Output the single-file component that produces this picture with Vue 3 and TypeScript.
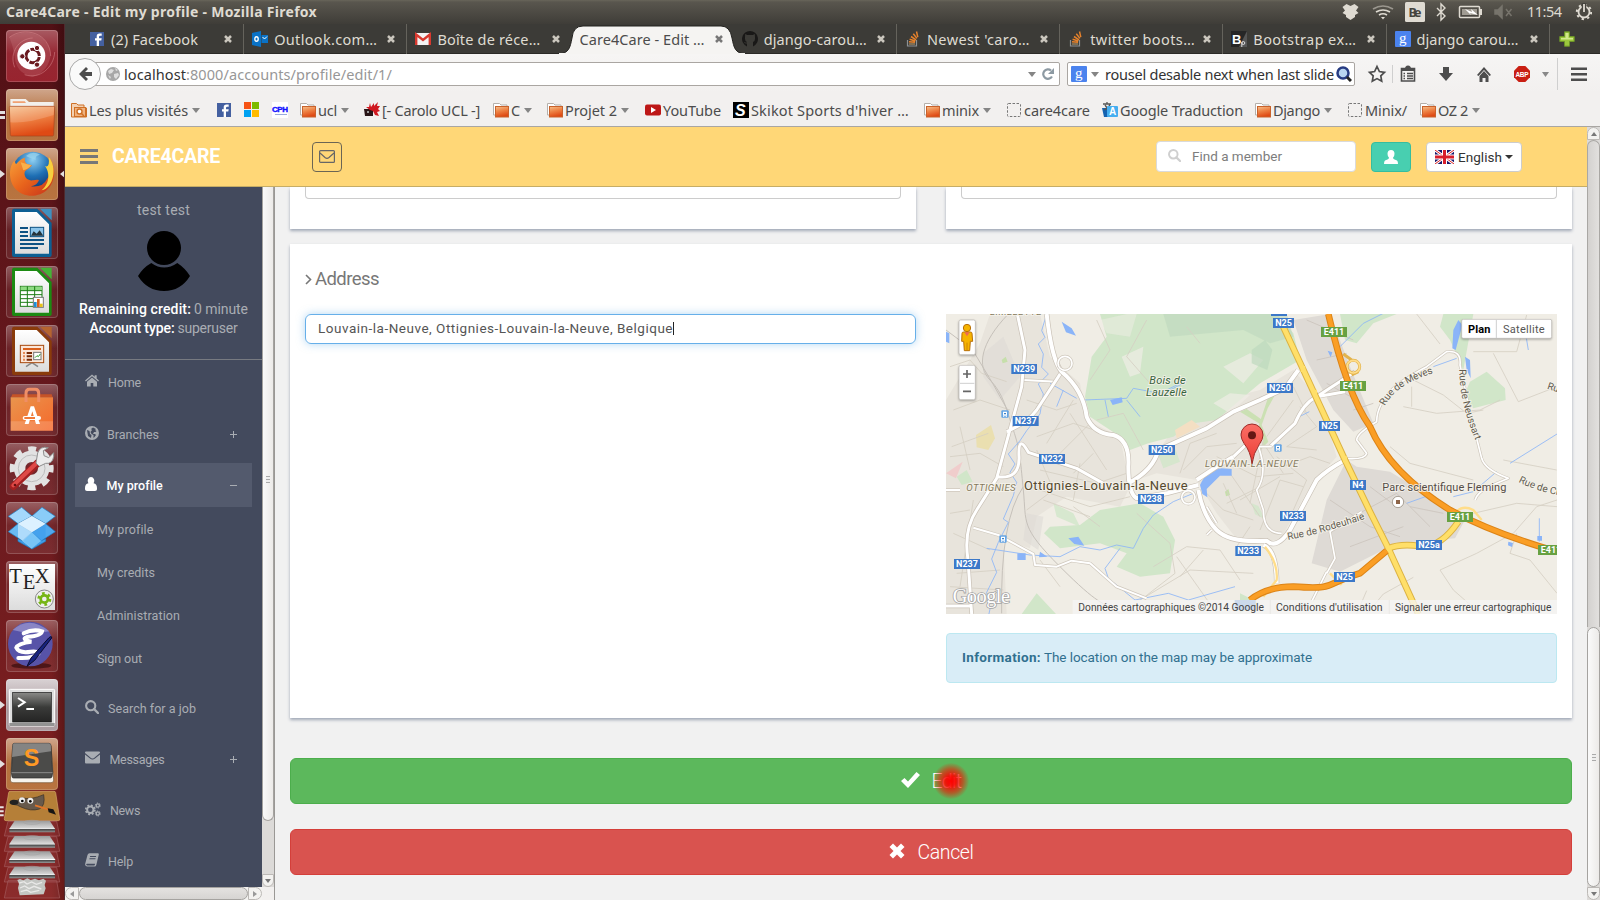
<script setup lang="ts">
import type { Directive } from 'vue'

interface Tab { title: string; width: number; icon: string; active?: boolean; sep?: boolean }
interface Bookmark { at: number; icon: string; label?: string; width?: number; menu?: boolean }
interface Shield { x: number; y: number; w: number; label: string; kind?: string }
interface Glyph { t: string; x: number; y: number; w?: number }
interface NavItem { label: string; width: number; icon?: string; iconWidth?: number; sign?: string; active?: boolean; sub?: boolean; height: number; gap?: number }

/* Tracks a piece of text so that it fills the given measure in pixels. */
const vFit: Directive<HTMLElement, number> = {
  mounted(el, binding) {
    const natural = el.getBoundingClientRect().width
    const count = (el.textContent ?? '').trim().length
    if (count) el.style.letterSpacing = `${((binding.value - natural) / count).toFixed(3)}px`
  },
}

const tabs: Tab[] = [
  { title: '(2) Facebook', width: 87, icon: 'facebook', sep: true },
  { title: 'Outlook.com…', width: 103, icon: 'outlook', sep: true },
  { title: 'Boîte de réce…', width: 103, icon: 'gmail' },
  { title: 'Care4Care - Edit …', width: 125, icon: '', active: true },
  { title: 'django-carou…', width: 103, icon: 'github', sep: true },
  { title: "Newest 'caro…", width: 103, icon: 'stack', sep: true },
  { title: 'twitter boots…', width: 105, icon: 'stack', sep: true },
  { title: 'Bootstrap ex…', width: 103, icon: 'bootply', sep: true },
  { title: 'django carou…', width: 102, icon: 'google', sep: true },
]

const bookmarks: Bookmark[] = [
  { at: 71, icon: 'smart', label: 'Les plus visités', width: 99, menu: true },
  { at: 216, icon: 'facebook' },
  { at: 243, icon: 'windows' },
  { at: 272, icon: 'cph' },
  { at: 300, icon: 'folder', label: 'ucl', width: 19, menu: true },
  { at: 364, icon: 'carolo', label: '[- Carolo UCL -]', width: 98 },
  { at: 493, icon: 'folder', label: 'C', width: 9, menu: true },
  { at: 547, icon: 'folder', label: 'Projet 2', width: 52, menu: true },
  { at: 645, icon: 'youtube', label: 'YouTube', width: 58 },
  { at: 733, icon: 'skikot', label: "Skikot Sports d'hiver …", width: 158 },
  { at: 924, icon: 'folder', label: 'minix', width: 37, menu: true },
  { at: 1006, icon: 'blank', label: 'care4care', width: 66 },
  { at: 1102, icon: 'translate', label: 'Google Traduction', width: 123 },
  { at: 1255, icon: 'folder', label: 'Django', width: 47, menu: true },
  { at: 1347, icon: 'blank', label: 'Minix/', width: 42 },
  { at: 1420, icon: 'folder', label: 'OZ 2', width: 30, menu: true },
  { at: 1500, icon: '' },
]
const slot = (i: number): number => bookmarks[i + 1].at - bookmarks[i].at

/* Letters that sit on top of some of the icons, in the icon's own units. */
const glyphs: Record<string, Glyph[]> = {
  bootply: [{ t: 'B', x: 1, y: 13 }],
  google: [{ t: 'g', x: 4, y: 12 }],
  cph: [{ t: 'CPH', x: 0, y: 10, w: 16 }],
  skikot: [{ t: 'S', x: 2, y: 14 }],
  translate: [{ t: 'A', x: 7, y: 13 }],
  tex: [{ t: 'T', x: 10, y: 67 }, { t: 'E', x: 50, y: 84 }, { t: 'X', x: 86, y: 67 }],
  sublime: [{ t: 'S', x: 53, y: 84 }],
}

const apps = ['ubuntu', 'files', 'firefox', 'writer', 'calc', 'impress', 'software', 'settings', 'dropbox', 'tex', 'emacs', 'terminal', 'sublime']
const running = ['files', 'firefox', 'terminal', 'sublime']

const nav: NavItem[] = [
  { label: 'Home', width: 33, icon: 'home', iconWidth: 23, height: 44, gap: 8 },
  { label: 'Branches', width: 52, icon: 'globe', iconWidth: 22, sign: '+', height: 44, gap: 7 },
  { label: 'My profile', width: 56, icon: 'user', iconWidth: 21.5, sign: '−', active: true, height: 44, gap: 1 },
  { label: 'My profile', width: 56, sub: true, height: 43 },
  { label: 'My credits', width: 58, sub: true, height: 43 },
  { label: 'Administration', width: 83, sub: true, height: 43 },
  { label: 'Sign out', width: 45, sub: true, height: 43, gap: 6 },
  { label: 'Search for a job', width: 88, icon: 'search', iconWidth: 23, height: 44, gap: 7 },
  { label: 'Messages', width: 55, icon: 'envelope', iconWidth: 24.5, sign: '+', height: 44, gap: 7 },
  { label: 'News', width: 30, icon: 'cogs', iconWidth: 25, height: 44, gap: 7 },
  { label: 'Help', width: 25, icon: 'book', iconWidth: 23, height: 44 },
]

const shields: Shield[] = [
  { x: 214, y: 192, w: 77, label: 'N239' }, { x: 218, y: 348, w: 78, label: 'N237' },
  { x: 297, y: 462, w: 78, label: 'N232' }, { x: 626, y: 435, w: 79, label: 'N250' },
  { x: 594, y: 582, w: 78, label: 'N238' }, { x: 42, y: 777, w: 78, label: 'N237' },
  { x: 886, y: 738, w: 77, label: 'N233' },
  { x: 999, y: 54, w: 63, label: 'N25' }, { x: 1143, y: 81, w: 78, label: 'E411', kind: 'green' },
  { x: 981, y: 249, w: 78, label: 'N250' }, { x: 1200, y: 243, w: 78, label: 'E411', kind: 'green' },
  { x: 1137, y: 363, w: 63, label: 'N25' }, { x: 1230, y: 540, w: 48, label: 'N4' },
  { x: 1020, y: 633, w: 78, label: 'N233' }, { x: 1521, y: 636, w: 78, label: 'E411', kind: 'green' },
  { x: 1428, y: 720, w: 78, label: 'N25a' }, { x: 1182, y: 816, w: 63, label: 'N25' },
  { x: 1794, y: 735, w: 78, label: 'E411', kind: 'green' },
]
</script>

<template>
  <div class="desktop">
    <svg class="defs" width="0" height="0">
      <defs>
        <linearGradient id="gFolder" x1="0" y1="0" x2="0.3" y2="1"><stop offset="0" stop-color="#f5c08c" /><stop offset=".5" stop-color="#ee8244" /><stop offset="1" stop-color="#df4a14" /></linearGradient>
        <linearGradient id="gPaper" x1="0" y1="0" x2="0" y2="1"><stop offset="0" stop-color="#fff" /><stop offset="1" stop-color="#dcdcdc" /></linearGradient>
        <linearGradient id="gBag" x1="0" y1="0" x2="1" y2="1"><stop offset="0" stop-color="#e9954d" /><stop offset="1" stop-color="#f5692c" /></linearGradient>
        <linearGradient id="gDark" x1="0" y1="0" x2="0" y2="1"><stop offset="0" stop-color="#8b8b89" /><stop offset=".5" stop-color="#3a3b39" /><stop offset="1" stop-color="#242424" /></linearGradient>
        <radialGradient id="gGlobe" cx=".5" cy=".2" r=".8"><stop offset="0" stop-color="#8fd0f2" /><stop offset=".5" stop-color="#1e6fb4" /><stop offset="1" stop-color="#0c2c66" /></radialGradient>
        <linearGradient id="gFox" x1="0" y1="0" x2="1" y2="1"><stop offset="0" stop-color="#f8a33b" /><stop offset=".5" stop-color="#e8641c" /><stop offset="1" stop-color="#c5301a" /></linearGradient>
        <linearGradient id="gDisk" x1="0" y1="0" x2="0" y2="1"><stop offset="0" stop-color="#9a9a9a" /><stop offset=".65" stop-color="#d8d8d8" /><stop offset=".7" stop-color="#fff" /><stop offset=".76" stop-color="#444" /><stop offset="1" stop-color="#999" /></linearGradient>
        <linearGradient id="gPin" x1="0" y1="0" x2="0" y2="1"><stop offset="0" stop-color="#fb6f66" /><stop offset="1" stop-color="#ea3b33" /></linearGradient>
      </defs>

      <!-- launcher -->
      <symbol id="app-ubuntu" viewBox="0 0 156 156">
        <g fill="none" stroke="#d98b90" stroke-opacity=".5" stroke-width="3"><path d="M10 22C55-12 132 8 134 78" /><path d="M26 112C8 66 40 26 80 24" /><path d="M56 134C100 150 144 112 146 66" /></g>
        <path d="M10 22C60-8 132 12 134 78q-10 50-54 62Q30 130 26 80Q20 45 10 22" fill="#d98b90" opacity=".22" />
        <circle cx="76" cy="77" r="42" fill="#fff" />
        <circle cx="80" cy="78" r="20" fill="none" stroke="#6a1a1f" stroke-width="9" stroke-dasharray="38 4" stroke-dashoffset="-3" />
        <g fill="#6a1a1f" stroke="#fff" stroke-width="3"><circle cx="49" cy="79" r="8" /><circle cx="93" cy="54" r="8" /><circle cx="93" cy="104" r="8" /></g>
      </symbol>
      <symbol id="app-files" viewBox="0 0 156 156">
        <path d="M13 30h46l10 9h74v20H13z" fill="#f3f0ec" /><path d="M20 37h36l4 5H20z" fill="#f0a172" />
        <path d="M10 54q0-2 3-2h130q3 0 3 2l-3 82q0 5-4 5H17q-4 0-4-5z" fill="url(#gFolder)" stroke="#a8441c" stroke-width="2" />
        <path d="M12 54h132l-1 24Q60 105 13 100z" fill="#fff" opacity=".17" />
      </symbol>
      <symbol id="app-firefox" viewBox="0 0 156 156">
        <circle cx="80" cy="72" r="61" fill="url(#gGlobe)" />
        <path d="M60 24q20-18 42-4q-16 3-13 16q-14-4-29-12" fill="#9bd6ee" opacity=".7" />
        <path d="M128 26C162 70 142 138 82 143C35 145 10 110 12 72c1-15 6-27 13-34l5 11c8-10 18-19 27-20c-2 8 0 15 6 19l15 4c-5 8-15 12-21 18c-6 16 8 30 24 27q12-3 18-1q-5 16-24 19q36 4 48-22C143 70 128 60 128 26" fill="url(#gFox)" />
        <path d="M128 26c27 32 15 93-21 101c28-24 22-58 10-73q15 7 11-28" fill="#f7cf3e" />
        <path d="M44 43l18 5 14 4q-9 12-24 15z" fill="#f8b04b" />
      </symbol>
      <symbol id="app-writer" viewBox="0 0 156 156">
        <path d="M24 5h70l43 43v96q0 6-6 6H24q-6 0-6-6V11q0-6 6-6" fill="#0d5f93" /><path d="M27 15h65l37 37v88H27z" fill="url(#gPaper)" /><path d="M102 5h35v35z" fill="#3f90bf" />
        <g fill="#0d5283"><path d="M42 60h24v6H42zM42 72h24v6H42zM42 84h24v6H42zM42 96h72v6H42zM42 108h72v6H42zM42 120h54v6H42z" /></g>
        <rect x="73" y="61" width="40" height="28" fill="#8cc5ea" stroke="#0d5283" stroke-width="3" /><path d="M75 86l8-13 9 7 9-10 11 16z" fill="#26343b" />
      </symbol>
      <symbol id="app-calc" viewBox="0 0 156 156">
        <path d="M24 5h70l43 43v96q0 6-6 6H24q-6 0-6-6V11q0-6 6-6" fill="#1c8a12" /><path d="M27 15h65l37 37v88H27z" fill="url(#gPaper)" /><path d="M102 5h35v35z" fill="#45b336" />
        <rect x="43" y="61" width="65" height="60" fill="#fff" stroke="#1c7c14" stroke-width="3" /><rect x="44" y="62" width="63" height="12" fill="#8edb82" /><path d="M43 74h65M43 86h65M43 98h65M43 109h65M64 61v60M86 61v60" stroke="#1c7c14" stroke-width="3" />
        <rect x="82" y="94" width="30" height="30" fill="#fff" stroke="#777" stroke-width="3" /><path d="M84 108h8v15h-8z" fill="#1e8fd6" /><path d="M93 99h8v24h-8z" fill="#d9601c" /><path d="M102 113h8v10h-8z" fill="#e6c21a" />
      </symbol>
      <symbol id="app-impress" viewBox="0 0 156 156">
        <path d="M24 5h70l43 43v96q0 6-6 6H24q-6 0-6-6V11q0-6 6-6" fill="#8a3b0b" /><path d="M27 15h65l37 37v88H27z" fill="url(#gPaper)" /><path d="M102 5h35v35z" fill="#b5642f" />
        <path d="M60 125l18-12 18 12" fill="none" stroke="#888" stroke-width="5" /><rect x="43" y="61" width="70" height="52" fill="#fbe6d8" stroke="#a8480c" stroke-width="3" />
        <path d="M51 69h54v6H51z" fill="#d9601c" /><path d="M51 81h6v6h-6zM51 91h6v6h-6zM51 101h6v6h-6z" fill="#e58a55" /><path d="M62 81h16v6H62zM62 91h16v6H62zM62 101h16v6H62z" fill="#7a2b05" /><rect x="83" y="82" width="22" height="22" fill="#fff" stroke="#777" stroke-width="3" /><path d="M87 98l6-6 4 3 6-8" fill="none" stroke="#2a9b22" stroke-width="3" />
      </symbol>
      <symbol id="app-software" viewBox="0 0 156 156">
        <path d="M19 31h118l3 9H15z" fill="#c65327" /><path d="M14 40h127v100H14z" fill="url(#gBag)" /><path d="M60 54V28q0-12 10-12h18q10 0 10 12v26" fill="none" stroke="#ef8e66" stroke-width="9" /><path d="M14 112h127v28H14z" fill="#fff" opacity=".17" />
        <path d="M56 120l18-53h10l18 53H90L79 82l-11 38z" fill="#fff" /><rect x="50" y="96" width="55" height="12" rx="6" fill="#fff" /><rect x="55" y="99" width="32" height="6" fill="#f07a39" />
      </symbol>
      <symbol id="app-settings" viewBox="0 0 156 156">
        <circle cx="77" cy="76" r="36" fill="none" stroke="#e2e2e2" stroke-width="34" /><circle cx="77" cy="76" r="58" fill="none" stroke="#e2e2e2" stroke-width="16" stroke-dasharray="24 21.5" stroke-dashoffset="12" /><circle cx="77" cy="76" r="40" fill="none" stroke="#bdbdbd" stroke-width="3" />
        <path d="M22 130L95 60" stroke="#a32021" stroke-width="22" stroke-linecap="round" /><path d="M22 127L92 60" stroke="#df4a47" stroke-width="12" stroke-linecap="round" />
        <path d="M90 60l10 10 19-9q20 3 24-20v-12l-15 15-14-6-2-15 15-9q-25-6-32 16z" fill="#ececec" stroke="#8e8e8e" stroke-width="3" /><circle cx="27" cy="126" r="4" fill="#611" />
      </symbol>
      <symbol id="app-dropbox" viewBox="0 0 156 156">
        <g stroke="#1c7fc4" stroke-width="2"><path d="M78 42L47 16 7 43l29 22z" fill="#a4d8fb" /><path d="M78 42l30-26 40 27-29 22z" fill="#8accf8" /><path d="M36 65L7 89l42 27 29-25z" fill="#6abaf3" /><path d="M119 65l29 24-42 27-28-25z" fill="#50a9ee" /><path d="M78 91l-29 25-13-6v8l42 23 41-23v-8l-13 6z" fill="#3f9ee9" /></g>
        <path d="M78 42L36 65v41l42 34z" fill="#bfe4fd" opacity=".8" /><path d="M78 42l41 23v41l-41 34z" fill="#3e9eec" opacity=".7" /><path d="M78 42l41 23-41 26-42-26z" fill="#dcf1ff" /><path d="M78 91l-28 26 28 22 27-22z" fill="#78c4f7" />
      </symbol>
      <symbol id="app-tex" viewBox="0 0 156 156">
        <rect x="9" y="9" width="138" height="138" fill="url(#gPaper)" />
        <circle cx="115" cy="114" r="27" fill="#eee" stroke="#888" stroke-width="3" /><circle cx="115" cy="114" r="11" fill="none" stroke="#76b515" stroke-width="8" /><circle cx="115" cy="114" r="17" fill="none" stroke="#76b515" stroke-width="8" stroke-dasharray="8 9.8" />
      </symbol>
      <symbol id="app-emacs" viewBox="0 0 156 156">
        <ellipse cx="76" cy="137" rx="60" ry="9" fill="#2c0708" opacity=".6" /><circle cx="73" cy="72" r="67" fill="#5753a8" /><path d="M20 30Q70-16 130 34Q70 45 20 30" fill="#aaa7d9" opacity=".6" />
        <path d="M53 40q29-15 55-6q-3 14-42 16q-24 7 10 15q-40 5-45 18q8 18 43 12q25-2 23 6q-14 15-60 13" fill="none" stroke="#fff" stroke-width="12" stroke-linecap="round" /><path d="M63 139l12-25 53-60q10-9 9 0l-51 67z" fill="#17237e" stroke="#090b2c" stroke-width="3" />
      </symbol>
      <symbol id="app-terminal" viewBox="0 0 156 156">
        <rect x="10" y="31" width="136" height="110" rx="3" fill="#dedede" stroke="#fff" stroke-width="3" /><rect x="10" y="132" width="136" height="9" fill="#929292" /><rect x="20" y="40" width="116" height="89" fill="url(#gDark)" stroke="#171717" stroke-width="2" /><path d="M36 57l20 13-20 13M61 90h23" fill="none" stroke="#fff" stroke-width="6" />
      </symbol>
      <symbol id="app-sublime" viewBox="0 0 156 156">
        <path d="M20 24l-7 102q0 8 8 8h114q9 0 8-8l-8-102z" fill="#f6f3ec" stroke="#765434" stroke-width="2" /><path d="M24 16h105q5 0 6 6l5 82-2 12q-1 4-6 4H23q-5 0-5-4l-2-12 4-82q0-6 4-6" fill="#4b4b49" stroke="#292929" stroke-width="2" /><path d="M24 16h105q5 0 6 7v17L18 57l2-35q0-6 4-6" fill="#aaa" opacity=".6" /><path d="M17 104h122" stroke="#aaa" stroke-width="2" />
      </symbol>

      <!-- 16px favicons -->
      <symbol id="i-facebook" viewBox="0 0 16 16"><rect x="1" y="1" width="14" height="14" fill="#4460a0" /><path d="M10 15V9.500h2.300l.4-2.300H10V5.900q0-1.100 1.200-1.100h1.500V2.600H10.500Q7.700 2.600 7.700 5.400v1.800H6v2.300h1.700V15z" fill="#fff" /></symbol>
      <symbol id="i-outlook" viewBox="0 0 16 16"><path d="M0 2l9-2v16l-9-2zM9.500 4H16v8H9.500z" fill="#0a72c6" /><ellipse cx="4.500" cy="8" rx="1.700" ry="2.300" fill="none" stroke="#fff" stroke-width="1.400" /><path d="M10.500 6l2 2L15 5.500" fill="none" stroke="#fff" /></symbol>
      <symbol id="i-gmail" viewBox="0 0 16 16"><path d="M0 2h16v12H0z" fill="#f3f3f3" /><path d="M1.200 14V3.500L8 9l6.800-5.500V14" fill="none" stroke="#d8392f" stroke-width="2.400" /></symbol>
      <symbol id="i-github" viewBox="0 0 16 16"><path d="M8 0a8 8 0 0 0-3 15.400V12.500Q2.800 13 2 11q1.500.2 2 1l1-1Q2.600 10 3 6.600L3.200 3l2 1h5.600l2-1 .2 3.600Q13.400 10 11 11v4.400A8 8 0 0 0 8 0" fill="#191817" /></symbol>
      <symbol id="i-stack" viewBox="0 0 16 16"><path d="M2.500 9v6h9V9" fill="none" stroke="#8e9295" stroke-width="1.200" /><path d="M4 13h6" stroke="#a68b62" stroke-width="1.300" /><path d="M4 10.800l6 .4M4.600 8.300l5.700 1.700M6 5.500l5 3.300M8.300 2.800l3.600 4.600M11.500.5l1.300 5.700" stroke="#e6822c" stroke-width="1.500" /></symbol>
      <symbol id="i-bootply" viewBox="0 0 16 16"><rect width="16" height="16" fill="#262626" /><path d="M16 0v16H8z" fill="#777" opacity=".6" /><circle cx="12.300" cy="12" r="1.500" fill="none" stroke="#ddd" /><path d="M10.800 11v5" stroke="#ddd" /></symbol>
      <symbol id="i-google" viewBox="0 0 16 16"><rect width="16" height="16" rx="1" fill="#4b83ee" /></symbol>
      <symbol id="i-windows" viewBox="0 0 16 16"><path d="M1 0h7v7H1z" fill="#f65314" /><path d="M9 0h7v7H9z" fill="#7cbb00" /><path d="M1 8h7v7H1z" fill="#00a1f1" /><path d="M9 8h7v7H9z" fill="#ffbb00" /></symbol>
      <symbol id="i-cph" viewBox="0 0 16 16"><rect width="16" height="16" fill="#fff" /><path d="M3 12.500h12" stroke="#9ad" /></symbol>
      <symbol id="i-folder" viewBox="0 0 16 16"><path d="M.5 13V1.500h6L8 3h6v10z" fill="#fff" stroke="#b5b0ab" /><rect x="2.500" y="4.500" width="13" height="10.500" fill="url(#gFolder)" stroke="#c9622c" /></symbol>
      <symbol id="i-smart" viewBox="0 0 16 16"><path d="M.5 15V1.500h5L7 3h6v3h2.500v9z" fill="#f3d1b3" stroke="#cf7026" /><rect x="3.500" y="5.500" width="11" height="9" fill="#f0b27f" stroke="#cf7026" /><circle cx="8.500" cy="9.500" r="2.500" fill="#fff" stroke="#cf7026" stroke-width="1.400" /><path d="M10.500 11.500l2.500 2.500" stroke="#cf7026" stroke-width="1.500" /></symbol>
      <symbol id="i-carolo" viewBox="0 0 16 16"><path d="M0 7h9v7H1z" fill="#291416" /><path d="M3 9h2v2H3z" fill="#999" /><path d="M2 5l3 0 1-4 1 4 3-4 0 3 4-4-1 4 3 0-2 3 2 2-3 1 2 4-4-1-2-4-3-1z" fill="#cf1820" /></symbol>
      <symbol id="i-youtube" viewBox="0 0 16 16"><rect y="2.500" width="16" height="11" rx="2" fill="#bd1717" /><path d="M6 5l5 3-5 3z" fill="#fff" /></symbol>
      <symbol id="i-skikot" viewBox="0 0 16 16"><rect width="16" height="16" /></symbol>
      <symbol id="i-blank" viewBox="0 0 16 16"><rect x="1.500" y="1.500" width="13" height="13" rx="1" fill="none" stroke="#777" stroke-dasharray="2.500 1.500" /></symbol>
      <symbol id="i-translate" viewBox="0 0 16 16"><path d="M0 6h8v9H2z" fill="#1462b0" /><path d="M1 2h8M5 0v2M2 8q5-2 6-6M3 3q2 4 6 5" stroke="#555" fill="none" stroke-width="1.300" /><rect x="5" y="4" width="11" height="11" rx="1" fill="#45aef0" /></symbol>

      <!-- page icons -->
      <symbol id="p-home" viewBox="0 0 14 12"><path d="M7 0l2.700 2.300V.8h2v3.100L14 6l-.9 1L7 1.800.9 7 0 6z" /><path d="M2 7.200L7 3l5 4.200V12H8.300V8.500H5.700V12H2z" /></symbol>
      <symbol id="p-globe" viewBox="0 0 14 14"><path fill-rule="evenodd" d="M7 0a7 7 0 1 0 0 14A7 7 0 0 0 7 0M8 1.500l3 1.500-1 1 1.500 1-1 1-1.500 0-1 2 2 0 1 1-1.500 2-1 1V9L6.500 8 5.500 6 7 4 6 3zM2 4l2.500 1L5 8l1.500 1L6 12 3 10z" /></symbol>
      <symbol id="p-user" viewBox="0 0 12 14"><path d="M6 0a3.400 3.800 0 0 1 2.600 6.200Q12 7 12 11v1.200Q12 14 10 14H2q-2 0-2-1.800V11Q0 7 3.400 6.200A3.400 3.800 0 0 1 6 0" /></symbol>
      <symbol id="p-search" viewBox="0 0 14 14"><circle cx="5.700" cy="5.700" r="4.600" fill="none" stroke="currentColor" stroke-width="2.100" /><path d="M9 9l4 4" stroke="currentColor" stroke-width="2.400" stroke-linecap="round" /></symbol>
      <symbol id="p-envelope" viewBox="0 0 15 12"><path d="M1 0h13q1 0 1 1v.6L9 6.500q-1.500 1-3 0L0 1.600V1q0-1 1-1M0 3l5 4q2.500 2 5 0l5-4v8q0 1-1 1H1q-1 0-1-1z" /></symbol>
      <symbol id="p-cogs" viewBox="0 0 16 14"><g fill="none" stroke="currentColor"><circle cx="5.300" cy="7.300" r="3.200" stroke-width="2" /><circle cx="5.300" cy="7.300" r="4.600" stroke-width="1.700" stroke-dasharray="1.900 1.720" /><circle cx="12.800" cy="3" r="1.600" stroke-width="1.300" /><circle cx="12.800" cy="3" r="2.500" stroke-dasharray="1.300 1.300" /><circle cx="12.800" cy="11" r="1.600" stroke-width="1.300" /><circle cx="12.800" cy="11" r="2.500" stroke-dasharray="1.300 1.300" /></g></symbol>
      <symbol id="p-book" viewBox="0 0 14 14"><path fill-rule="evenodd" d="M4.500.3H13q1 .2.800 1.300L11.300 12q-.4 1.600-1.800 1.600H2Q-.3 13.300.2 10.800L2.500 2Q3 .3 4.500.3M5.200 3l-.3 1h6l.3-1zM4.600 5.300l-.3 1h6l.3-1zM2 10.700q-.8.100-.8.900 0 .8.900.8h7q.6 0 .8-.9l.2-.8z" /></symbol>
    </svg>

    <header class="panel">
      <b v-fit="311" class="panel-title">Care4Care - Edit my profile - Mozilla Firefox</b>
      <svg class="tray" viewBox="0 0 252 24" width="252" height="24">
        <path d="M6.500 4l4 2 4-2 4 3-2.500 3.500 2.500 2.500-3.500 2v2l-4.500 3-4.500-3v-2l-3.500-2L5 10.500 2.500 7z" fill="#dfdbd2" />
        <g fill="none" stroke="#b9b5ac" stroke-width="1.700"><path d="M33 9q10-6 20 0" opacity=".7" /><path d="M36 12q7-4 14 0M39 15q4-2.500 8 0" stroke="#dfdbd2" /></g><path d="M41 17h4l-2 2.500z" fill="#dfdbd2" />
        <rect x="65" y="2" width="20" height="20" rx="1.500" fill="#dfdbd2" /><text x="68.500" y="17" textLength="13" class="kb">Be</text>
        <path d="M97 8l8 8-4 4V4l4 4-8 8" fill="none" stroke="#dfdbd2" stroke-width="1.400" />
        <rect x="119.500" y="6.500" width="20" height="11" rx="1" fill="none" stroke="#dfdbd2" stroke-width="1.500" /><path d="M140 9h2v6h-2z" fill="#dfdbd2" /><rect x="122" y="9" width="15" height="6" fill="#a09c93" /><path d="M125 9l7 3-1-3 7 6-8-2 1 2z" fill="#fff" />
        <path d="M155 10h3l4-4v12l-4-4h-3zM166 9l5.500 7M171.500 9l-5.500 7" fill="#77746c" stroke="#77746c" stroke-width="1.500" />
        <text x="187" y="17" textLength="35" class="clock">11:54</text>
        <circle cx="244" cy="12" r="5.500" fill="none" stroke="#dfdbd2" stroke-width="1.800" /><circle cx="244" cy="12" r="7.200" fill="none" stroke="#dfdbd2" stroke-width="2" stroke-dasharray="2.300 3.350" /><path d="M244 3v9" stroke="#45433d" stroke-width="4.500" /><path d="M244 4v8" stroke="#dfdbd2" stroke-width="1.800" />
      </svg>
    </header>

    <div class="workspace">
      <aside class="launcher">
        <div v-for="app in apps" :key="app" class="tile" :class="app">
          <svg viewBox="0 0 156 156" width="52" height="52"><use :href="'#app-' + app" /><text v-for="g in glyphs[app] ?? []" :key="g.t" :x="g.x" :y="g.y" :class="'gl-' + app">{{ g.t }}</text></svg>
          <i v-if="running.includes(app)" class="pip" :class="{ double: app === 'files' }" />
          <i v-if="app === 'firefox'" class="focus" />
        </div>
        <svg class="stack" viewBox="0 0 195 330" width="65" height="110">
          <path d="M30 4h132q4 0 5 4l12 78q1 6-4 6H18q-6 0-5-6L26 8q1-4 4-4" fill="#b57f38" stroke="#d5a869" stroke-width="2" />
          <path d="M38 31q16 4 25-8 30 8 68-9 6 33-13 43-25 8-55-6-10-7-25-8z" fill="#67594b" stroke="#332c25" stroke-width="2" /><circle cx="66" cy="31" r="9" fill="#eee" /><circle cx="91" cy="32" r="9" fill="#eee" /><circle cx="67" cy="33" r="4" /><circle cx="91" cy="34" r="4" /><ellipse cx="42" cy="37" rx="13" ry="8" fill="#222" /><path d="M105 46l42 13" stroke="#e1762a" stroke-width="5" /><path d="M143 55l17 3 8 16-22-7z" fill="#171513" />
          <path d="M0 52h11M0 64h11M0 76h11" stroke="#e8e4e4" stroke-width="6" />
          <g v-for="n in 4" :key="n" :transform="`translate(0 ${(n - 1) * 46})`">
            <path d="M24 94h146l9 44H13z" fill="#a34f52" fill-opacity=".25" stroke="#a45c5e" stroke-width="2" /><path d="M44 92h105l16 24v11H28v-11z" fill="url(#gDisk)" /><ellipse cx="96" cy="97" rx="25" ry="6" fill="none" stroke="#a4a4a4" stroke-width="2" />
          </g>
          <path d="M24 272h146l9 52H13z" fill="#a34f52" fill-opacity=".25" stroke="#a45c5e" stroke-width="2" /><path d="M52 270l8-3 10 4 12-6 10 5 13-4 12 5 13-5 8 6-4 13 3 10-6 18-72 3-5-22 3-12z" fill="#c4c6c3" /><path d="M58 279l14-4 9 7 14-6 14 7 17-6M60 294l14-6 13 8 15-7 22 8M62 305l18-5 12 7 26-6" stroke="#e9e9e8" fill="none" stroke-width="4" />
        </svg>
      </aside>

      <div class="browser">
        <div class="tabstrip">
          <div v-for="tab in tabs" :key="tab.title" class="tab" :class="{ active: tab.active, sep: tab.sep }">
            <svg v-if="tab.active" class="tab-shape" viewBox="0 0 186 30" width="186" height="30"><path d="M0 30C10 29 11 24 13 14Q14 2 24 2H162Q171 2 173 14C175 24 176 29 186 30z" fill="#f5f4f2" stroke="#23221f" stroke-width="1" /><path d="M0 30h186" stroke="#f5f4f2" stroke-width="2" /></svg>
            <svg v-if="tab.icon" class="fav" viewBox="0 0 16 16" width="16" height="16"><use :href="'#i-' + tab.icon" /><text v-for="g in glyphs[tab.icon] ?? []" :key="g.t" :x="g.x" :y="g.y" :class="'gl-' + tab.icon">{{ g.t }}</text></svg>
            <span class="tab-text"><span v-fit="tab.width">{{ tab.title }}</span></span>
            <svg class="close" viewBox="0 0 8 8" width="8" height="8"><path d="M1 1l6 6M7 1L1 7" stroke="currentColor" stroke-width="2.500" /></svg>
          </div>
          <svg class="plus" viewBox="0 0 16 16" width="16" height="16"><path d="M5.500.8h5v4.700h4.700v5h-4.700v4.700h-5v-4.700H.8v-5h4.700z" fill="#9cc83d" stroke="#6d9428" /><path d="M6.500 2h3v5H14v1.500H2V7h4.500z" fill="#d3ea8c" /></svg>
        </div>

        <div class="toolbar">
          <div class="back"><svg viewBox="0 0 14 16" width="14" height="16"><path d="M8 1L1 8l7 7 2-2-3-3h7V6H7l3-3z" fill="#4c4c4c" /></svg></div>
          <div class="urlbar">
            <svg viewBox="0 0 14 14" width="14" height="14"><circle cx="7" cy="7" r="7" fill="#a7a7a7" /><path d="M2 4l3-2 3 1-2 3-3 1zM8 7l4-1 1 2-3 4-2-2zM9 1l3 2-2 1zM2 8l3 2-1 2z" fill="#dedede" /></svg>
            <span v-fit="62" class="host">localhost</span><span v-fit="206" class="path">:8000/accounts/profile/edit/1/</span>
            <i class="arrow" />
            <svg class="reload" viewBox="0 0 12 12" width="12" height="12"><path d="M10 8.500A4.700 4.700 0 1 1 9 2.500" fill="none" stroke="#8d9aa3" stroke-width="2.200" /><path d="M12 0v6H6z" fill="#8d9aa3" /></svg>
          </div>
          <div class="searchbar">
            <svg viewBox="0 0 16 16" width="16" height="16"><use href="#i-google" /><text x="4" y="12" class="gl-google">g</text></svg><i class="arrow" />
            <div class="query"><span v-fit="229">rousel desable next when last slide</span></div>
            <svg viewBox="0 0 16 16" width="16" height="16"><circle cx="7" cy="7" r="5.500" fill="#b7d4f1" stroke="#263b82" stroke-width="2.500" /><path d="M11 11l4 4" stroke="#222" stroke-width="3" /></svg>
          </div>
          <svg class="actions" viewBox="0 0 238 32" width="238" height="32" fill="#4d4d4d">
            <path d="M15 8.500l2.400 5 5.100.8-3.700 3.600.9 5.300L15 20.600l-4.700 2.600.9-5.300L7.500 14.300l5.100-.8z" fill="none" stroke="#4d4d4d" stroke-width="1.700" />
            <path d="M30.500 7v18M195.500 0v32" stroke="#cfcfcf" />
            <path d="M39.500 10.500h13v12.500h-13z" fill="none" stroke="#4d4d4d" stroke-width="1.600" /><path d="M43 11q0-3.500 3-3.500t3 3.500zM39 10h14v3H39z" /><path d="M41.500 15.500h1.500M45 15.500h6M41.500 18h1.500M45 18h6M41.500 20.500h1.500M45 20.500h6" stroke="#4d4d4d" stroke-width="1.300" />
            <path d="M81 9h6v6h4l-7 8-7-8h4z" /><path d="M115 17l7-8 7 8-1.500 1L122 12l-5.500 6z" /><path d="M117.500 18l4.500-5 4.500 5v6h-3v-4h-3v4h-3z" />
            <path d="M156.700 8h6.600l4.700 4.700v6.600l-4.700 4.700h-6.600l-4.700-4.700v-6.600z" fill="#c91f13" /><text x="153.500" y="19" textLength="13" class="abp">ABP</text>
            <path d="M180 14h7l-3.500 5z" fill="#888" /><path d="M209 9.500h16v2.500h-16zM209 15h16v2.500h-16zM209 20.500h16v2.500h-16z" />
          </svg>
        </div>

        <nav class="bookmarks">
          <div v-for="(mark, i) in bookmarks.slice(0, -1)" :key="mark.at" class="mark" :style="{ width: slot(i) + 'px' }">
            <svg viewBox="0 0 16 16" width="16" height="16"><use :href="'#i-' + mark.icon" /><text v-for="g in glyphs[mark.icon] ?? []" :key="g.t" :x="g.x" :y="g.y" :textLength="g.w" :class="'gl-' + mark.icon">{{ g.t }}</text></svg>
            <span v-if="mark.label" v-fit="mark.width ?? 0">{{ mark.label }}</span>
            <i v-if="mark.menu" class="arrow" />
          </div>
        </nav>

        <div class="viewport">
          <div class="page">
            <header class="topbar">
              <svg class="burger" viewBox="0 0 18 15" width="18" height="15"><path d="M0 1.500h18M0 7.500h18M0 13.500h18" stroke="#777" stroke-width="3" /></svg>
              <b v-fit="108" class="brand">CARE4CARE</b>
              <button class="mail"><svg viewBox="0 0 16 13" width="16" height="13" fill="none" stroke="#666"><rect x=".6" y=".6" width="14.800" height="11.800" rx="1" stroke-width="1.200" /><path d="M1 3l5 4.500q2 1.600 4 0L15 3" stroke-width="1.200" /></svg></button>
              <div class="find"><svg viewBox="0 0 14 14" width="13" height="13"><use href="#p-search" /></svg><span v-fit="90">Find a member</span></div>
              <button class="me"><svg viewBox="0 0 14 14" width="14" height="14"><path d="M7 0q3.500 0 3.500 3.800 0 2.500-1.500 4 0 1 1 1.400l3 1.300q1 .6 1 3.500H0q0-2.900 1-3.500l3-1.300q1-.4 1-1.400-1.500-1.500-1.500-4Q3.500 0 7 0" fill="#fff" /></svg></button>
              <button class="lang">
                <svg viewBox="0 0 19 14" width="19" height="14"><rect width="19" height="14" fill="#16166b" /><path d="M0 0l19 14M19 0L0 14" stroke="#fff" stroke-width="3" /><path d="M0 0l19 14M19 0L0 14" stroke="#d22" stroke-width="1" /><path d="M9.500 0v14M0 7h19" stroke="#fff" stroke-width="5" /><path d="M9.500 0v14M0 7h19" stroke="#d81e2c" stroke-width="3" /></svg>
                <span v-fit="44">English</span><i />
              </button>
            </header>

            <div class="body">
              <div class="side-frame">
                <aside class="sidebar">
                  <section class="profile">
                    <p><span v-fit="53">test test</span></p>
                    <svg viewBox="0 0 156 180" width="52" height="60"><circle cx="78" cy="51" r="51" /><path d="M0 135Q15 110 40 96Q78 123 118 96Q142 112 156 135Q128 180 78 180T0 135" /></svg>
                    <p><b v-fit="112">Remaining credit:</b><span v-fit="54">0 minute</span></p>
                    <p><b v-fit="85">Account type:</b><span v-fit="60">superuser</span></p>
                  </section>
                  <ul>
                    <li v-for="(item, i) in nav" :key="i" :class="{ on: item.active, sub: item.sub }" :style="{ height: item.height + 'px', marginBottom: (item.gap ?? 0) + 'px' }">
                      <span v-if="item.icon" class="ico" :style="{ width: item.iconWidth + 'px' }"><svg :class="item.icon"><use :href="'#p-' + item.icon" /></svg></span>
                      <span v-fit="item.width">{{ item.label }}</span>
                      <svg v-if="item.sign" class="sign" viewBox="0 0 7 7" width="7" height="7"><path :d="item.sign === '+' ? 'M0 3.500h7M3.500 0v7' : 'M0 3.500h7'" stroke="currentColor" /></svg>
                    </li>
                  </ul>
                </aside>
                <div class="vbar side"><div class="thumb"><i /></div><div class="step down" /></div>
                <div class="hbar"><div class="step left" /><div class="thumb" /><div class="step right" /></div>
              </div>

              <main class="content">
                <div class="pair"><section class="card"><div class="field" /></section><section class="card"><div class="field" /></section></div>

                <section class="card address">
                  <h3><svg viewBox="0 0 7 11" width="7" height="11"><path d="M1 1l4.500 4.500L1 10" fill="none" stroke="#777" stroke-width="1.600" /></svg><span v-fit="64">Address</span></h3>
                  <div class="columns">
                    <div class="input"><span v-fit="355">Louvain-la-Neuve, Ottignies-Louvain-la-Neuve, Belgique</span><i /></div>
                    <div class="where">
                      <svg class="map" viewBox="18 42 1833 900" width="611" height="300">
                        <rect x="18" y="42" width="1833" height="900" fill="#f0ede5" />
                        <g fill="#e8e4dc">
                          <path d="M18 300L120 130 150 42H300L330 170 420 250 440 360 540 410 570 560 540 620 380 590 290 650 270 745 190 720 200 942H18z" />
                          <path d="M700 390L840 300 960 270 1060 210 1140 300 1190 470 1110 560 1020 720 900 730 830 640 770 540 650 520 590 540z" />
                        </g>
                        <g fill="#dedad5">
                          <path d="M1060 60L1170 42 1230 200 1300 370 1240 395 1180 330 1100 180z" /><path d="M1220 480L1250 500 1350 515 1450 575 1580 650 1545 715 1370 730 1200 815 1115 790 1160 600z" />
                          <path d="M130 160L190 110 240 230 180 300 130 230z" opacity=".6" /><path d="M260 640L310 650 295 750 250 720z" opacity=".6" />
                        </g>
                        <g fill="#d1e6c9">
                          <path d="M480 42H1010L1060 100 1080 180 960 250 900 300 830 360 760 370 700 410 625 430 570 450 525 400 450 350 435 290 455 170 500 110z" />
                          <path d="M330 680L420 675 480 630 600 610 670 650 705 720 690 820 600 830 530 800 560 760 480 730 360 745 312 700z" />
                          <path d="M1200 42H1370L1300 70 1250 130 1215 120zM1510 42H1600L1570 210 1530 120 1500 80z" /><path d="M1590 245L1640 215 1695 265 1697 300 1600 325 1570 290z" />
                          <path d="M245 942L290 880 348 942zM900 880L960 910 900 940zM50 530L80 510 98 545 65 555z" />
                          <path d="M340 610l60 30 20 40-70-30zM935 610l20 8 20 40-30-15zM655 465l50-20 15 40-50 20z" opacity=".8" />
                        </g>
                        <path d="M480 60L560 42H590L570 110 500 100z" fill="#f0ede5" opacity=".5" /><path d="M545 170l65-30-10 80-30 10zM850 200l80-40 40 20-60 70zM820 310l50-30 60 5-60 55z" fill="#f0ede5" opacity=".7" />
                        <path d="M670 42H1040L1060 110 990 130 910 90 690 110z" fill="#bfd8bf" opacity=".65" /><path d="M935 150l40-30 22 30-15 60-47-20z" fill="#bdd9bd" opacity=".7" />
                        <g fill="#c6dfab"><path d="M900 335l20-8 50 35-6 12zM985 290l20-5-22 40-18 50 20 50-25 25 10-30-15-40z" opacity=".85" /><path d="M185 180l12-10 6 15-15 5zM855 575l10-8 5 18-12 4z" /></g>
                        <path d="M108 405l45-30 12 40-20 35-35-8z" fill="#eadfb0" /><path d="M705 390l50-30 25 20-70 35z" fill="#f4dfc3" /><path d="M18 520l50-35-20 50z" fill="#f0cdcc" />

                        <g fill="none" stroke="#d5cfc3" stroke-width="2.500">
                          <path d="M30 200l60-20 35 40 75 25M40 330l80-30 90 30M30 470l90-10 70 40M35 440l110-40M60 380l30 130M260 300l90 30 60-20M290 410l110-40 140 45M400 300l-80 130M350 470l100-100M390 340l110 170M300 510l170 40 90-30M270 560l180 60 120-30M310 600l140 50M420 490l-20 110M460 460l-60 60M30 640l60-10M40 700l110 50M50 820l130-10M30 860l160 10M100 600l-40 260M290 450l50 120-80 60M470 60l40 90-60 90M620 60l-60 110 70 80M740 80l40 50M470 360l80-20 60 110" />
                          <path d="M590 640l100 90 15 90-90 70M640 800l100-60 100 10 60 90M710 770l120 170M600 900l150-90 190 10M790 750l-70 80M300 780l60 80M400 620l80 60M930 680l-40 60" />
                          <path d="M730 510l70-70 90-10M790 570l60 60 90 30M830 470l120 60 110-10M850 550l40 90M870 520l90 130M900 400l70 30 60 90M970 420l-40 190M900 600l120-70M960 690l60-150 70 20M860 610l100-50M1060 300l-80 110M1080 320l50 60-90 60 90 10M1010 470l90 70-40 90M1060 260l40 80M1030 500l80-30 60 20M720 520l30-90 80-30" />
                          <path d="M1100 60l140 60M1130 180l90-20M1160 250l90 50M1240 330l60-20M1170 600l120 80 90 30M1290 560l80 60M1220 660l150-80 100 100M1230 740l160-60M1410 620l100 20" stroke="#cbc4bd" />
                          <path d="M1430 42l70 90M1600 155h130l30-110M1660 160l75 145 116-45M1415 260v60M1420 240l90 45 70 55 50-10M1390 320l100 20 130-10 60-30M1690 480l160 30M1350 440l60 50 190 50M1600 640l130-30 121 10M1500 810l110-50 110-60 70-80 61-20M1500 810l40 60 80 70M1730 700l-20 60 60 20 81 100M1280 942l50-60 90-50M1250 942l30-70" />
                        </g>
                        <g fill="none" stroke="#c6c1ba" stroke-width="3"><path d="M205 42C120 130 110 200 150 240S200 330 220 390 240 470 250 570 240 680 360 800 480 900 540 942" /><path d="M18 90l80 60 60 100 50 90M250 560q-70 100-65 380" /></g>
                        <g fill="none" stroke="#8ab4f8" stroke-width="2.500">
                          <path d="M320 42l-15 50 10 20-20 20 15 30-5 40 20 20-30 30 15 30-10 60-40 50-20 30-35 40 20 30-15 25 20 30-10 40-30 70 15 10-30 60-20 50 15 40-30 60 10 50-15 70 40 50" />
                          <path d="M140 745l130 20 90 5 60-30 60 10 50-15 50 10 30-60 30-40 60-40 60-25M540 745l-45 60 10 30 80 65 100-20 60 20 140-40M430 300l130-5 20-30 80 15 60-30M495 300l10 50M560 300l40 50M330 250l80 45M350 320l20-50M680 275l60-30" />
                          <path d="M1200 140l70-70 60-30M1750 60l15 90M1480 200l70-25M1068 370l10-20 30-15M1540 590l60-15 70-60M1400 610l70-25M1710 490l141-88M1798 655v70" />
                        </g>
                        <g fill="#8ab4f8"><path d="M365 65l30 20 13 22-30-10zM385 715l30-5 18 27-30-5zM232 760h25v20h-25zM300 755l22 15-25 2zM510 300l35-8 3 15-30 8zM780 555q20-45 65-50l30 2v20l-35 0-40 40 2 25-15-10z" /><path d="M1540 90l15-30 12 15-20 75-10-5zM1575 170l15 10 2 55-12-25zM1163 152l14 5-5 15zM1792 708h14v14h-14zM1705 725l14 4-3 12-12-5zM1115 65l12-4M18 95l10 5v30l-10-5z" /></g>

                        <g fill="none" stroke="#d5cec3" stroke-linejoin="round">
                          <path v-for="w in [1, 0]" :key="w" :stroke="w ? '#cfc8bd' : '#fff'" :stroke-width="w ? 10 : 6" d="M250 240L350 245M100 683L175 705 280 762 285 795 350 800 395 782 450 790 530 860 620 895M18 570H60" />
                          <path v-for="w in [1, 0]" :key="'a' + w" :stroke="w ? '#c9c1b6' : '#fff'" :stroke-width="w ? 13 : 9" d="M232 42L255 150 245 260 170 535 110 630Q70 690 84 780L95 942M200 395Q260 370 290 330L365 215M170 530Q240 540 237 470T265 457L410 505 490 550M18 918H90M875 475L915 437M1215 275L1130 290Q1090 310 1065 370L990 440M1130 290L1245 215" />
                          <path v-for="w in [1, 0]" :key="'b' + w" :stroke="w ? '#c9c1b6' : '#fff'" :stroke-width="w ? 16 : 12" d="M320 42Q335 180 365 215Q430 270 440 350Q460 400 520 405Q570 420 565 500Q565 580 590 595L680 580 775 555M565 550Q640 510 655 450L800 385 880 335 960 300 1035 265 1075 210M770 540L830 500 880 470M775 570Q790 650 830 690Q870 730 980 722Q1010 750 1050 690L1130 540Q1160 510 1215 480M970 735Q1010 750 1010 850" />
                          <g v-for="w in [1, 0]" :key="'c' + w" :stroke="w ? '#cfc8bd' : '#fff'" :stroke-width="w ? 9 : 5"><circle cx="375" cy="190" r="21" /><circle cx="745" cy="592" r="20" /><path d="M800 620l30 50M815 690l-15 15M1215 475q60 5 65-15l-30-40q0-20 60-55 0-55 60-110 60-40 90-55l60-45q45-5 40 40l25 120 40 160q10 35 80 60l-60 25q-35 20-40 40M955 440q30 80-5 130l20 60q0 70 55 70M950 440l45 0M1265 635l-95 60 15 80-25 45M1160 815l-45 90" /></g>
                          <g stroke="#e2b34d"><circle cx="1240" cy="200" r="19" stroke-width="9" /><path d="M1210 162l25 18M1255 215l-20 10" stroke-width="9" /></g><g stroke="#ffdd8a"><circle cx="1240" cy="200" r="19" stroke-width="5" /><path d="M975 740Q1015 790 1010 840L970 890M1170 820l35 35M1540 650q20-40 60-20l25 30" stroke-width="7" /></g>
                          <path v-for="w in [1, 0]" :key="'d' + w" :stroke="w ? '#dcb343' : '#ffdf69'" :stroke-width="w ? 20 : 14" d="M1025 70L1088 205 1215 480 1290 635 1345 745 1435 942M1345 745Q1380 730 1440 738T1555 665" />
                          <path v-for="w in [1, 0]" :key="'e' + w" :stroke="w ? '#dc8417' : '#fa9e25'" :stroke-width="w ? 20 : 14" d="M1165 42Q1220 280 1290 380Q1350 520 1530 630Q1660 700 1851 755M930 900Q980 860 1060 860C1200 870 1150 850 1260 820L1340 752" />
                          <path d="M1082 207h14M1121 278h10M1209 478h12" stroke="#ffdf69" stroke-width="18" />
                        </g>

                        <g v-for="p in [[195, 342], [189, 717], [1014, 444]]" :key="p[1]" :transform="`translate(${p[0]} ${p[1]})`"><rect x="-11" y="-11" width="22" height="22" rx="3" fill="#64a4e4" /><path d="M-6-7H6V5H-6zM-6 6h4v2h-4zM2 6h4v2H2z" fill="#fff" /><path d="M-3-3h6v4h-6z" fill="#3c82cc" /></g>

                        <rect x="993" y="36" width="48" height="12" fill="#3c78c8" /><rect x="884" y="900" width="63" height="30" fill="#3c78c8" />
                        <g v-for="(s, i) in shields" :key="i"><rect :x="s.x" :y="s.y" :width="s.w" height="30" :fill="s.kind ? '#67a142' : '#3c78c8'" /><text :x="s.x + s.w / 2" :y="s.y + 25" class="shield">{{ s.label }}</text></g>

                        <g class="labels">
                          <text x="628" y="251" textLength="109" class="wood">Bois de</text><text x="618" y="287" textLength="122" class="wood">Lauzelle</text>
                          <text x="252" y="571" textLength="491" class="town">Ottignies-Louvain-la-Neuve</text>
                          <text x="79" y="574" textLength="148" class="quarter">OTTIGNIES</text><text x="795" y="502" textLength="280" class="quarter">LOUVAIN-LA-NEUVE</text>
                          <text x="150" y="46" textLength="155" class="quarter">LIMELETTE</text>
                          <text x="1327" y="572" textLength="372" class="park">Parc scientifique Fleming</text>
                          <defs><path id="wMeves" d="M1335 318Q1365 255 1480 219" /><path id="wNeus" d="M1558 208Q1558 310 1608 425" /><path id="wRod" d="M1044 720Q1150 700 1280 655" /><path id="wCr" d="M1735 546Q1790 575 1880 590" /></defs>
                          <text class="street"><textPath href="#wMeves" textLength="180">Rue de Mèves</textPath></text><text class="street"><textPath href="#wNeus" textLength="220">Rue de Neussart</textPath></text><text class="street"><textPath href="#wRod" textLength="240">Rue de Rodeuhaie</textPath></text><text class="street"><textPath href="#wCr">Rue de Croix</textPath></text><text x="1820" y="266" transform="rotate(18 1820 266)" class="street">Rue</text>
                        </g>
                        <circle cx="1374" cy="606" r="17" fill="#fff" stroke="#aaa297" stroke-width="3" /><path d="M1368 600h12v12h-12z" fill="#8d6549" />
                        <path d="M936 491Q932 455 912 430Q903 416 903 405A33 33 0 0 1 969 405Q969 418 958 433Q940 460 936 491" fill="url(#gPin)" stroke="#9e2b28" stroke-width="3" /><circle cx="936" cy="406" r="12" fill="#651714" />

                        <rect x="398" y="900" width="1453" height="42" fill="#f5f5f5" fill-opacity=".78" /><path d="M991 900v42M1348 900v42" stroke="#e6e4df" stroke-width="2" />
                        <g class="legal"><text x="415" y="933" textLength="557" lengthAdjust="spacingAndGlyphs">Données cartographiques ©2014 Google</text><text x="1008" y="933" textLength="320" lengthAdjust="spacingAndGlyphs">Conditions d'utilisation</text><text x="1365" y="933" textLength="469" lengthAdjust="spacingAndGlyphs">Signaler une erreur cartographique</text></g>
                        <text x="38" y="909" textLength="172" class="logo">Google</text>

                        <g class="ctl"><rect x="57" y="60" width="49" height="104" rx="5" /><rect x="57" y="196" width="49" height="103" rx="5" /><rect x="1565" y="58" width="270" height="57" rx="5" /></g>
                        <path d="M60 250h43M1669 59v55" stroke="#cfcfcf" stroke-width="3" /><path d="M69 222h24M81 210v24M69 274h24" stroke="#666" stroke-width="5" />
                        <g fill="#f6b400" stroke="#b8700a" stroke-width="3"><path d="M66 100q0-4 5-4h20q5 0 5 4l2 24h-7l-2 28H73l-2-28h-6z" /><circle cx="81" cy="84" r="11" /><path d="M81 128v22" stroke-width="2" /><path d="M73 97h16l-8 12z" fill="#ed6b54" stroke="none" /></g>
                        <text x="1584" y="98" textLength="67" class="plan">Plan</text><text x="1689" y="98" textLength="125" class="sat">Satellite</text>
                      </svg>
                      <div class="info"><b v-fit="79">Information:</b><span v-fit="268">The location on the map may be approximate</span></div>
                    </div>
                  </div>
                </section>

                <button class="big edit"><svg viewBox="0 0 19 16" width="19" height="16"><path d="M0 9l3.500-3L7 9.500 15.500 0 19 3 7 16z" fill="#fff" /></svg><span v-fit="30">Edit</span><i class="click" /></button>
                <button class="big cancel"><svg viewBox="0 0 16 16" width="16" height="16"><path d="M4 .5l4 4 4-4L15.500 4l-4 4 4 4L12 15.500l-4-4-4 4L.5 12l4-4-4-4z" fill="#fff" /></svg><span v-fit="56">Cancel</span></button>
              </main>
            </div>
          </div>
          <div class="vbar main"><div class="step up" /><div class="trough" /><div class="thumb"><i /></div><div class="step down" /></div>
        </div>
      </div>
    </div>
  </div>
</template>

<style>
html, body { margin: 0; overflow: hidden; }
</style>

<style scoped>
* { box-sizing: border-box; }
.desktop { width: 1600px; height: 900px; overflow: hidden; display: flex; flex-direction: column; font: 14.5px "Noto Sans", "Open Sans", sans-serif; color: #4c4c4c; }
.desktop span, .desktop b { display: inline-block; white-space: nowrap; }
.defs { position: absolute; }
button { font: inherit; padding: 0; margin: 0; }
.gl-tex { font: 62px "Liberation Serif", serif; fill: #222; }
.gl-sublime { font: bold 70px "Liberation Sans", sans-serif; fill: #ff9924; }
.gl-bootply { font: bold 13px "Liberation Sans", sans-serif; fill: #fff; }
.gl-google { font: 15px "Liberation Serif", serif; fill: #fff; }
.gl-cph { font: bold 8px "Liberation Sans", sans-serif; fill: #11f; stroke: #11f; stroke-width: .4px; }
.gl-skikot { font: italic bold 16px "Liberation Sans", sans-serif; fill: #fff; }
.gl-translate { font: bold 10px "Liberation Sans", sans-serif; fill: #fff; }

.panel { height: 24px; flex: none; display: flex; justify-content: space-between; padding: 0 8px 0 6px; align-items: center; background: linear-gradient(#68655a 0, #59564e 2px, #3f3d38 24px); color: #dfdbd2; }
.panel-title { font-size: 14px; line-height: 24px; }
.kb { font: bold 12.500px "Noto Sans", sans-serif; fill: #45433d; }
.clock { font: 14.500px "Noto Sans", sans-serif; fill: #dfdbd2; }
.workspace { flex: 1; display: flex; min-height: 0; }

.launcher { width: 65px; flex: none; padding: 6px 0 0 6px; display: flex; flex-direction: column; gap: 7px; background: linear-gradient(90deg, rgba(0,0,0,0) 80%, rgba(0,0,0,.22)), linear-gradient(#521015, #6a1a1f 50%, #83211f); border-right: 1px solid #4f2a2e; overflow: hidden; }
.tile { position: relative; width: 52px; height: 52px; flex: none; border-radius: 4px; background: linear-gradient(rgba(255,255,255,.3), rgba(255,255,255,.05) 45%, rgba(255,255,255,.08)); box-shadow: inset 0 0 0 1px rgba(255,255,255,.18); }
.tile > svg { display: block; }
.tile.ubuntu { background: linear-gradient(#a85a62, #962833 45%, #98242f); }
.tile.files, .tile.firefox, .tile.sublime { background: linear-gradient(#cfa68c, #b5703d 50%, #b87440); }
.tile.terminal { background: linear-gradient(#d9d2d4, #a8989c 60%, #ab9da1); }
.pip { position: absolute; left: -6px; top: 22px; border: solid transparent; border-width: 4px 0 4px 5px; border-left-color: #e3dfdf; }
.pip.double { border: 0; border-top: 3px solid #e3dfdf; border-bottom: 3px solid #e3dfdf; width: 5px; height: 8px; }
.focus { position: absolute; right: -7px; top: 22px; border: solid transparent; border-width: 4px 5px 4px 0; border-right-color: #e3dfdf; }
.stack { margin: -7px 0 0 -6px; flex: none; }

.browser { flex: 1; display: flex; flex-direction: column; min-width: 0; background: #f2f0ef; }
.tabstrip { height: 30px; flex: none; display: flex; align-items: center; background: #3c3b37; padding-left: 16px; color: #dfdbd2; border-bottom: 1px solid #2b2a27; }
.tab { position: relative; width: 163.200px; height: 30px; flex: none; display: flex; align-items: center; padding: 0 11px 0 8px; }
.tab.sep { border-right: 1px solid #65635c; }
.fav { flex: none; margin-right: 6px; }
.tab-text { flex: 1; overflow: hidden; line-height: 28px; }
.close { flex: none; color: #cbc7be; }
.tab.active { color: #4c4c4c; z-index: 1; padding-left: 9px; }
.tab.active > * { position: relative; }
.tab.active > .tab-shape { position: absolute; left: -12px; top: 0; }
.tab.active .close { color: #777; }
.plus { margin-left: 9px; }

.toolbar { height: 38px; flex: none; display: flex; align-items: center; padding: 2px 0 0 4px; background: linear-gradient(#f6f5f4, #f2f0ef); }
.back { z-index: 1; width: 32px; height: 32px; flex: none; border: 1px solid #a9a9a9; border-radius: 50%; background: #fafafa; display: grid; place-items: center; }
.urlbar { width: 974px; height: 24px; flex: none; margin-left: -15px; padding: 0 5px 0 19px; border: 1px solid #aaa6a2; border-radius: 2px; background: #fff; display: flex; align-items: center; line-height: 22px; }
.host { margin-left: 4px; color: #333; }
.path { color: #979797; }
.arrow { width: 0; height: 0; border: solid transparent; border-width: 5px 4px 0; border-top-color: #858585; }
.urlbar .arrow { margin-left: auto; }
.reload { margin-left: 6px; }
.searchbar { width: 288px; height: 24px; flex: none; margin-left: 7px; padding: 0 2px 0 3px; border: 1px solid #aaa6a2; border-radius: 2px; background: #fff; color: #333; display: flex; align-items: center; }
.searchbar .arrow { margin-left: 4px; }
.query { flex: 1; overflow: hidden; display: flex; justify-content: flex-end; margin: 0 2px 0 6px; line-height: 22px; }
.actions { margin-left: 7px; }
.abp { font: bold 6.500px "Liberation Sans", sans-serif; fill: #fff; }

.bookmarks { height: 35px; flex: none; display: flex; align-items: center; padding: 2px 0 0 6px; border-bottom: 1px solid #a9a6a3; }
.mark { display: flex; align-items: center; flex: none; line-height: 20px; }
.mark > svg { flex: none; margin-right: 2px; }
.mark .arrow { margin-left: 4px; }

.viewport { flex: 1; min-height: 0; display: flex; }
.page { width: 1522px; display: flex; flex-direction: column; font-family: Roboto, sans-serif; font-size: 13.500px; background: #f1f1f1; }
.topbar { height: 60px; flex: none; display: flex; align-items: center; background: #ffd777; border-bottom: 1px solid #c6ad66; padding-left: 15px; }
.brand { margin-left: 14px; color: #fff; font-size: 19.500px; }
.mail { margin-left: 92px; width: 30px; height: 30px; border: 1px solid #6b6554; border-radius: 4px; background: none; display: grid; place-items: center; }
.find { margin-left: 814px; width: 200px; height: 31px; border: 1px solid #dadada; border-radius: 4px; background: #fff; display: flex; align-items: center; padding: 0 0 2px 11px; color: #7d7d7d; }
.find svg { color: #cfcfcf; margin-right: 11px; }
.me { margin-left: 15px; width: 40px; height: 30px; border: 1px solid #36bd9f; border-radius: 4px; background: #48cfb0; display: grid; place-items: center; }
.lang { margin-left: 15px; width: 96px; height: 30px; border: 1px solid #ccc; border-radius: 4px; background: #fff; color: #333; display: flex; align-items: center; padding-left: 8px; }
.lang svg { margin-right: 4px; }
.lang i { margin-left: 3px; border: solid transparent; border-width: 4px 4px 0; border-top-color: #333; }

.body { flex: 1; min-height: 0; display: flex; }
.side-frame { width: 210px; flex: none; display: grid; grid-template: 700px 13px / 197px 12px; border-right: 1px solid #9a9895; background: #f2f0ef; }
.sidebar { background: #434a5d; overflow: hidden; color: #a9adb3; }
.profile { height: 173px; padding: 14px 0 0; text-align: center; border-bottom: 1px solid #777a81; }
.profile p { margin: 0; height: 19px; line-height: 19px; font-size: 14px; display: flex; justify-content: center; gap: 3px; }
.profile > svg { display: block; margin: 11px auto 9px; }
.profile b { color: #fff; font-weight: 500; }
ul { margin: 0; padding: 0 10px; list-style: none; font-size: 12.500px; }
li { display: flex; align-items: center; padding: 0 15px 0 10px; }
li.sub { padding-left: 22px; }
li.on { background: #535a6d; color: #fff; font-weight: 500; }
.ico { height: 16px; flex: none; }
.ico svg { display: block; width: 14px; height: 14px; fill: currentColor; }
.ico .home { height: 13px; }
.ico .user { width: 12px; }
.ico .envelope { width: 15px; height: 13px; }
.ico .cogs { width: 16px; height: 15px; }
.sign { margin: 1px 0 0 auto; color: #a9adb3; }

.vbar { display: flex; flex-direction: column; background: #dcdad8; }
.thumb { border: 1px solid #a5a3a0; border-radius: 7px; background: linear-gradient(90deg, #fafafa, #eceae8); display: grid; place-items: center; }
.thumb i { width: 4px; height: 7px; border: solid #aaa; border-width: 1px 0; background: linear-gradient(#eee 2px, #aaa 2px, #aaa 3px, #eee 3px); }
.step { display: grid; place-items: center; background: #f3f2f0; border: 1px solid #bcb9b6; flex: none; }
.step::after { content: ""; border: solid transparent; }
.step.down { height: 13px; border-radius: 0 0 7px 7px; }
.step.down::after { border-width: 4px 3px 0; border-top-color: #777; }
.step.up { height: 13px; border-radius: 7px 7px 0 0; }
.step.up::after { border-width: 0 3px 4px; border-bottom-color: #777; }
.step.left, .step.right { width: 14px; }
.step.left { border-radius: 7px 0 0 7px; }
.step.right { border-radius: 0 7px 7px 0; }
.step.left::after { border-width: 3px 4px 3px 0; border-right-color: #999; }
.step.right::after { border-width: 3px 0 3px 4px; border-left-color: #999; }
.vbar.side .thumb { height: 634px; border-top: 0; border-radius: 0 0 7px 7px; padding-bottom: 48px; }
.vbar.side .step { margin-top: auto; }
.hbar { display: flex; background: #f3f2f0; }
.hbar .thumb { flex: 1; background: linear-gradient(#e4e2e0, #d6d4d2); }
.vbar.main { width: 13px; }
.trough { height: 487px; border: 1px solid #a9a7a4; border-bottom: 0; border-radius: 7px 7px 0 0; background: linear-gradient(90deg, #d3d1cf, #e2e0de); }
.vbar.main .thumb { flex: 1; }

.content { flex: 1; padding: 0 15px; }
.card { background: #fff; box-shadow: 0 2px 3px #a0a8b6; }
.pair { display: flex; gap: 30px; width: 1282px; height: 42px; }
.pair .card { flex: 1; padding: 0 15px; clip-path: inset(0 -5px -8px -5px); }
.field { height: 12px; border: 1px solid #ccc; border-top: 0; border-radius: 0 0 4px 4px; }
.address { margin-top: 15px; width: 1282px; height: 474px; padding: 0 15px; box-shadow: 0 2px 3px #a0a8b6; }
h3 { margin: 0; height: 70px; line-height: 70px; font-weight: normal; font-size: 18.500px; color: #777; display: flex; align-items: center; gap: 3px; }
.columns { display: flex; gap: 30px; }
.input { width: 611px; height: 30px; border: 1px solid #66afe9; border-radius: 6px; box-shadow: 0 0 8px rgba(102,175,233,.5); padding: 0 0 2px 12px; display: flex; align-items: center; color: #555; }
.input i { width: 1px; height: 13px; background: #222; }
.map { display: block; font-family: Roboto, sans-serif; }
.shield { font-size: 27px; font-weight: bold; fill: #fff; text-anchor: middle; }
.labels text { paint-order: stroke; stroke: #f5f2ea; stroke-width: 6px; stroke-opacity: .85; }
.wood { font-size: 33px; font-style: italic; fill: #38643e; }
.town { font-size: 39px; fill: #55492f; }
.quarter { font-size: 29px; font-style: italic; fill: #857a5d; }
.park { font-size: 33px; fill: #544c47; }
.street { font-size: 30px; fill: #625c50; }
.legal { font-size: 33px; fill: #444; }
.logo { font: 61px "Liberation Serif", serif; fill: #fff; stroke: #a5a5a5; stroke-width: 5px; paint-order: stroke; }
.ctl rect { fill: #fff; stroke: #b9b7b2; stroke-width: 2px; filter: drop-shadow(0 3px 3px rgba(0,0,0,.3)); }
.plan { font-size: 33px; font-weight: bold; fill: #000; }
.sat { font-size: 33px; fill: #555; }
.info { margin-top: 19px; width: 611px; height: 50px; border: 1px solid #bce8f1; border-radius: 4px; background: #d9edf7; color: #31708f; display: flex; align-items: center; gap: 3px; padding: 0 0 2px 15px; }
.big { position: relative; width: 1282px; height: 46px; border: 1px solid; border-radius: 6px; color: #fff; font-size: 19.500px; font-weight: 300; display: flex; align-items: center; justify-content: center; gap: 12px; }
.edit { margin-top: 40px; background: #5cb85c; border-color: #4cae4c; }
.cancel { margin-top: 25px; gap: 13px; background: #d9534f; border-color: #d43f3a; }
.big svg { margin-top: -3px; }
.click { position: absolute; left: 642px; top: 4px; width: 36px; height: 36px; border-radius: 50%; background: radial-gradient(circle, #f00 0, rgba(255,0,0,.9) 20%, rgba(240,20,0,.55) 48%, rgba(255,0,0,0) 72%); }
</style>
